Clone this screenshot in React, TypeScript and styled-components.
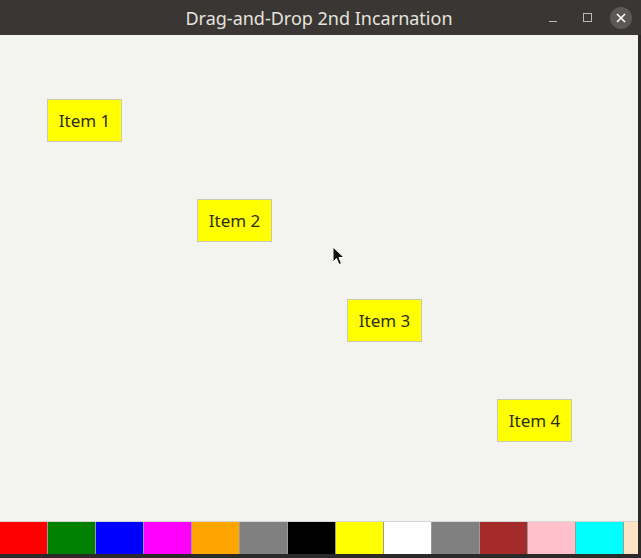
import React from 'react';
import styled, { createGlobalStyle } from 'styled-components';

const GlobalStyle = createGlobalStyle`
  html, body {
    margin: 0;
    padding: 0;
    background: #2b2a28;
  }
`;

type ItemType = { label: string; x: number; y: number };

const items: ItemType[] = [
  { label: 'Item 1', x: 47, y: 64 },
  { label: 'Item 2', x: 197, y: 164 },
  { label: 'Item 3', x: 347, y: 264 },
  { label: 'Item 4', x: 497, y: 364 },
];

const colors = [
  'red',
  'green',
  'blue',
  'magenta',
  'orange',
  'gray',
  'black',
  'yellow',
  'white',
  'gray',
  'brown',
  'pink',
  'cyan',
  'bisque',
];

export default function App() {
  return (
    <>
      <GlobalStyle />
      <Window>
        <TitleBar>
          <Title>Drag-and-Drop 2nd Incarnation</Title>
          <Controls>
            <Minimize />
            <Maximize />
            <Close>
              <svg width="10" height="10" viewBox="0 0 10 10">
                <path d="M1 1 L9 9 M9 1 L1 9" stroke="#ffffff" strokeWidth="1.6" />
              </svg>
            </Close>
          </Controls>
        </TitleBar>
        <Body>
          <Canvas>
            {items.map((item) => (
              <Item key={item.label} style={{ left: item.x, top: item.y }}>
                {item.label}
              </Item>
            ))}
            <Pointer width="13" height="20" viewBox="0 0 13 20">
              <path
                d="M1 1 L1 16 L4.5 12.5 L7 18.5 L9.5 17.5 L7 11.5 L12 11.5 Z"
                fill="#111111"
                stroke="#ffffff"
                strokeWidth="1"
              />
            </Pointer>
          </Canvas>
          <Palette>
            {colors.map((c, i) => (
              <Swatch key={i} color={c} />
            ))}
          </Palette>
        </Body>
      </Window>
    </>
  );
}

const Window = styled.div`
  width: 641px;
  height: 558px;
  display: flex;
  flex-direction: column;
  background: #2b2a28;
  overflow: hidden;
`;

const TitleBar = styled.div`
  height: 35px;
  flex-shrink: 0;
  background: #393634;
  position: relative;
  display: flex;
  align-items: center;
  justify-content: center;
`;

const Title = styled.div`
  font-family: 'Noto Sans', 'Open Sans', sans-serif;
  font-size: 18px;
  color: #e6e3de;
  margin-left: -3px;
`;

const Controls = styled.div`
  position: absolute;
  right: 9px;
  top: 0;
  height: 35px;
  display: flex;
  align-items: center;
  gap: 14px;
`;

const Minimize = styled.div`
  width: 8px;
  height: 1px;
  margin-top: 8px;
  background: #bdbab5;
  margin-right: 12px;
`;

const Maximize = styled.div`
  width: 7px;
  height: 7px;
  border: 1px solid #bdbab5;
  margin-right: 4px;
`;

const Close = styled.div`
  width: 22px;
  height: 22px;
  border-radius: 50%;
  background: #5b5956;
  display: flex;
  align-items: center;
  justify-content: center;
`;

const Body = styled.div`
  width: 638px;
  flex: 1;
  display: flex;
  flex-direction: column;
  margin-bottom: 4px;
`;

const Canvas = styled.div`
  position: relative;
  flex: 1;
  background: #f3f3ef;
  border-bottom: 1px solid #d6d6d0;
`;

const Item = styled.div`
  position: absolute;
  width: 73px;
  height: 41px;
  box-sizing: content-box;
  border: 1px solid #c9c9b5;
  background: #ffff00;
  display: flex;
  align-items: center;
  justify-content: center;
  font-family: 'Noto Sans', 'Open Sans', sans-serif;
  font-size: 17px;
  color: #2e2e1c;
`;

const Pointer = styled.svg`
  position: absolute;
  left: 332px;
  top: 211px;
`;

const Palette = styled.div`
  height: 32px;
  display: flex;
  flex-shrink: 0;
  overflow: hidden;
  background: #9a9a9a;
  gap: 1px;
`;

const Swatch = styled.div<{ color: string }>`
  flex: 0 0 47px;
  height: 32px;
  background: ${(props) => props.color};
`;
